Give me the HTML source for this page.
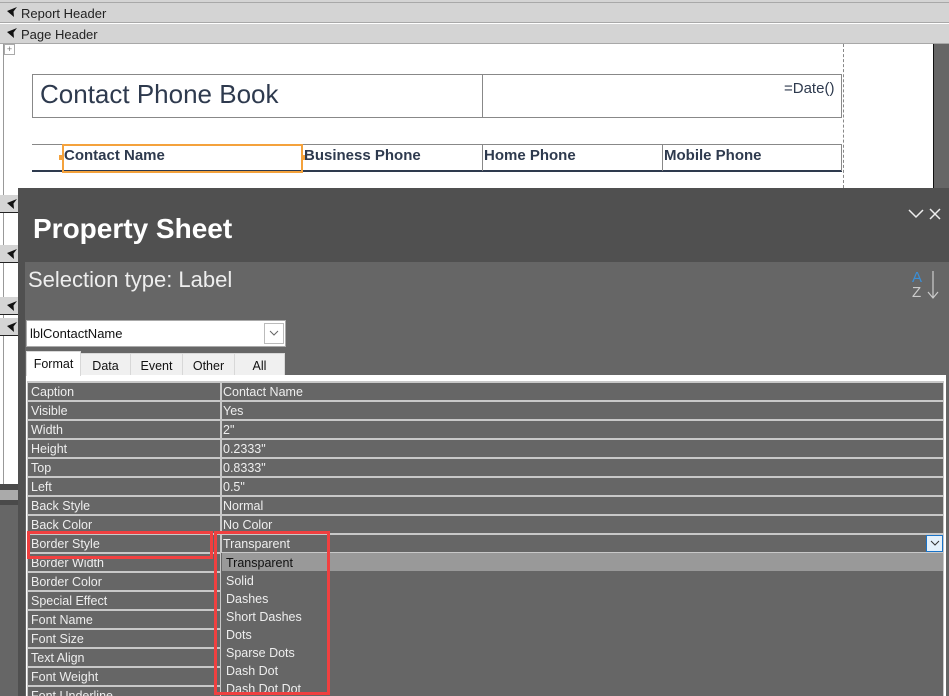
<!DOCTYPE html>
<html><head><meta charset="utf-8"><style>
*{margin:0;padding:0;box-sizing:border-box}
html,body{width:949px;height:696px;overflow:hidden}
body{background:#fff;position:relative;font-family:"Segoe UI","Liberation Sans","DejaVu Sans",sans-serif}
#w{position:absolute;left:0;top:0;width:949px;height:696px;overflow:hidden}
.a{position:absolute}
.bar{position:absolute;left:0;width:949px;height:20px;background:#d4d4d4;border-bottom:1px solid #a8a8a8;font-size:13px;color:#222;line-height:21px;padding-left:21px}
.bar:before{content:"";position:absolute;left:7px;top:4px;width:10px;height:10px;background:#111;clip-path:polygon(0 40%,100% 0,65% 45%,70% 100%)}
.sb{position:absolute;left:0;width:18px;height:18px;background:#d4d4d4;border-bottom:1px solid #222}
.sb:before{content:"";position:absolute;left:7px;top:4px;width:10px;height:10px;background:#111;clip-path:polygon(0 40%,100% 0,65% 45%,70% 100%)}
.hdr{position:absolute;font-weight:bold;font-size:15px;color:#2e3a4e}
.row{position:absolute;left:28px;width:915px;height:17px;font-size:12.5px;color:#eee;line-height:19px}
.row .k{position:absolute;left:0;width:192px;height:17px;background:#666;padding-left:3px}
.row .v{position:absolute;left:194px;right:0;height:17px;background:#666;padding-left:1px}
.it{position:absolute;left:226px;font-size:12.5px;color:#eee;line-height:20px}
.tab{position:absolute;top:353px;height:22px;background:#f0f0f0;border:1px solid #d8d8d8;border-bottom:none;font-size:12.5px;color:#111;text-align:center;line-height:24px}
</style></head><body><div id="w">
<div class="a" style="left:0;top:0;width:949px;height:3px;background:#d4d4d4;border-bottom:1px solid #a8a8a8"></div>
<div class="bar" style="top:3px">Report Header</div>
<div class="bar" style="top:24px">Page Header</div>
<div class="a" style="left:843px;top:44px;width:2px;height:144px;border-left:1px dashed #888"></div>
<div class="a" style="left:933px;top:44px;width:16px;height:144px;background:#666;border-left:1px solid #111"></div>
<div class="a" style="left:4px;top:44px;width:11px;height:11px;border:1px solid #aaa;font-size:9px;line-height:9px;text-align:center;color:#777">+</div>
<div class="a" style="left:32px;top:74px;width:451px;height:44px;border:1px solid #888"></div>
<div class="a" style="left:482px;top:74px;width:360px;height:44px;border:1px solid #888"></div>
<div class="a" style="left:40px;top:79px;font-size:26px;color:#2e3a4e">Contact Phone Book</div>
<div class="a" style="left:784px;top:80px;font-size:15px;color:#2e3a4e">=Date()</div>
<div class="a" style="left:32px;top:144px;width:810px;height:28px;border-top:1px solid #888;border-bottom:2px solid #2e3a4e"></div>
<div class="a" style="left:482px;top:144px;width:1px;height:27px;background:#888"></div>
<div class="a" style="left:662px;top:144px;width:1px;height:27px;background:#888"></div>
<div class="a" style="left:841px;top:144px;width:1px;height:27px;background:#888"></div>
<div class="a" style="left:62px;top:144px;width:241px;height:29px;border:2px solid #f4a23c"></div>
<div class="a" style="left:59px;top:155px;width:5px;height:5px;background:#f4a23c"></div>
<div class="a" style="left:302px;top:155px;width:5px;height:5px;background:#f4a23c"></div>
<div class="hdr" style="left:64px;top:147px">Contact Name</div>
<div class="hdr" style="left:304px;top:147px">Business Phone</div>
<div class="hdr" style="left:484px;top:147px">Home Phone</div>
<div class="hdr" style="left:664px;top:147px">Mobile Phone</div>
<div class="a" style="left:0;top:44px;width:4px;height:440px;background:#fff;border-right:1px solid #999"></div>
<div class="sb" style="top:195px"></div>
<div class="sb" style="top:245px"></div>
<div class="sb" style="top:297px"></div>
<div class="sb" style="top:318px"></div>
<div class="a" style="left:0;top:484px;width:18px;height:212px;background:#666"></div>
<div class="a" style="left:0;top:484px;width:18px;height:6px;background:#4a4a4a"></div>
<div class="a" style="left:0;top:490px;width:18px;height:10px;background:#aaa"></div>
<div class="a" style="left:0;top:500px;width:18px;height:5px;background:#4a4a4a"></div>
<div class="a" style="left:18px;top:188px;width:931px;height:508px;background:#505050"></div>
<div class="a" style="left:25px;top:262px;width:924px;height:434px;background:#666"></div>
<div class="a" style="left:33px;top:213px;font-size:28px;font-weight:bold;color:#fff">Property Sheet</div>
<svg class="a" style="left:906px;top:205px" width="40" height="20"><path d="M3 5 L10 12 L17 5" stroke="#eee" stroke-width="1.5" fill="none"/><path d="M24 4 L34 14 M34 4 L24 14" stroke="#eee" stroke-width="1.5"/></svg>
<div class="a" style="left:28px;top:267px;font-size:22px;color:#eee">Selection type: Label</div>
<div class="a" style="left:912px;top:271px;font-size:15px;color:#3a8fd8;line-height:14px">A</div>
<div class="a" style="left:912px;top:286px;font-size:15px;color:#ccc;line-height:14px">Z</div>
<svg class="a" style="left:926px;top:270px" width="14" height="30"><path d="M7 1 V28 M2 22 L7 28 L12 22" stroke="#ccc" stroke-width="1.2" fill="none"/></svg>
<div class="a" style="left:26px;top:320px;width:260px;height:27px;background:#fff;border:1px solid #aaa;font-size:13px;line-height:25px;padding-left:3px;color:#111">lblContactName</div>
<div class="a" style="left:264px;top:323px;width:20px;height:21px;border:1px solid #bbb;background:#fff"></div>
<svg class="a" style="left:269px;top:329px" width="10" height="8"><path d="M1 2 L5 6 L9 2" stroke="#666" fill="none"/></svg>
<div class="a" style="left:26px;top:375px;width:920px;height:321px;background:#fff"></div>
<div class="a" style="left:27px;top:381px;width:917px;height:315px;background:#c8c8c8"></div>
<div class="tab" style="left:80px;width:51px">Data</div>
<div class="tab" style="left:130px;width:53px">Event</div>
<div class="tab" style="left:182px;width:53px">Other</div>
<div class="tab" style="left:234px;width:51px">All</div>
<div class="tab" style="left:26px;top:351px;width:55px;height:25px;background:#fff;line-height:25px">Format</div>
<div class="row" style="top:383px"><div class="k">Caption</div><div class="v">Contact Name</div></div>
<div class="row" style="top:402px"><div class="k">Visible</div><div class="v">Yes</div></div>
<div class="row" style="top:421px"><div class="k">Width</div><div class="v">2"</div></div>
<div class="row" style="top:440px"><div class="k">Height</div><div class="v">0.2333"</div></div>
<div class="row" style="top:459px"><div class="k">Top</div><div class="v">0.8333"</div></div>
<div class="row" style="top:478px"><div class="k">Left</div><div class="v">0.5"</div></div>
<div class="row" style="top:497px"><div class="k">Back Style</div><div class="v">Normal</div></div>
<div class="row" style="top:516px"><div class="k">Back Color</div><div class="v">No Color</div></div>
<div class="row" style="top:535px"><div class="k">Border Style</div><div class="v">Transparent</div></div>
<div class="row" style="top:554px"><div class="k">Border Width</div></div>
<div class="row" style="top:573px"><div class="k">Border Color</div></div>
<div class="row" style="top:592px"><div class="k">Special Effect</div></div>
<div class="row" style="top:611px"><div class="k">Font Name</div></div>
<div class="row" style="top:630px"><div class="k">Font Size</div></div>
<div class="row" style="top:649px"><div class="k">Text Align</div></div>
<div class="row" style="top:668px"><div class="k">Font Weight</div></div>
<div class="row" style="top:687px"><div class="k">Font Underline</div></div>
<div class="a" style="left:926px;top:535px;width:17px;height:17px;background:#e5f1fb;border:1px solid #1a73c8"></div>
<svg class="a" style="left:930px;top:540px" width="10" height="7"><path d="M1 1 L5 5 L9 1" stroke="#333" fill="none"/></svg>
<div class="a" style="left:221px;top:553px;width:722px;height:143px;background:#666"></div>
<div class="a" style="left:222px;top:553px;width:721px;height:18px;background:#999"></div>
<div class="it" style="top:553px;color:#111">Transparent</div>
<div class="it" style="top:571px">Solid</div>
<div class="it" style="top:589px">Dashes</div>
<div class="it" style="top:607px">Short Dashes</div>
<div class="it" style="top:625px">Dots</div>
<div class="it" style="top:643px">Sparse Dots</div>
<div class="it" style="top:661px">Dash Dot</div>
<div class="it" style="top:679px">Dash Dot Dot</div>
<div class="a" style="left:27px;top:531px;width:186px;height:28px;border:3px solid #f04040"></div>
<div class="a" style="left:214px;top:531px;width:116px;height:164px;border:3px solid #f04040"></div>
</div></body></html>
